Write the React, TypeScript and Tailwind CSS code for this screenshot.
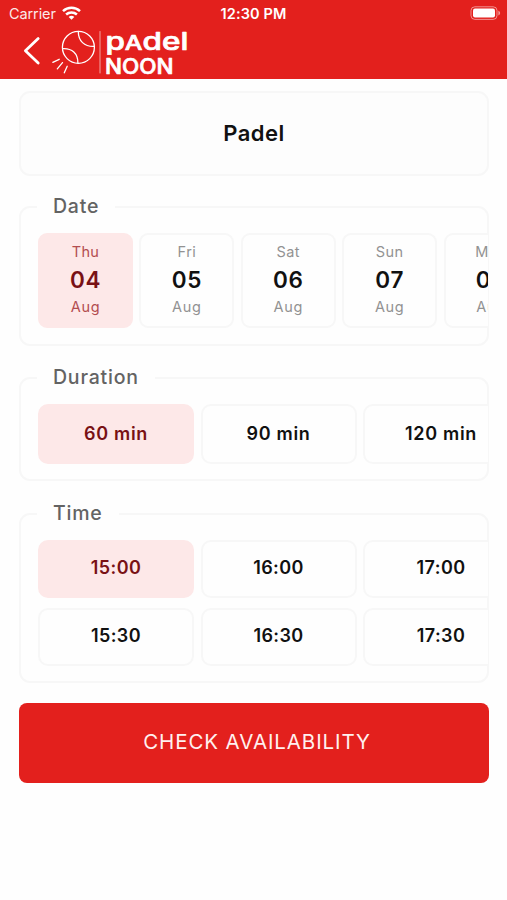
import React from 'react';

const DATES = [
  { day: 'Thu', date: '04', month: 'Aug' },
  { day: 'Fri', date: '05', month: 'Aug' },
  { day: 'Sat', date: '06', month: 'Aug' },
  { day: 'Sun', date: '07', month: 'Aug' },
  { day: 'Mon', date: '08', month: 'Aug' },
];

const DURATIONS = ['60 min', '90 min', '120 min'];

const TIMES = [
  ['15:00', '15:30'],
  ['16:00', '16:30'],
  ['17:00', '17:30'],
];

const Logo = () => (
  <svg className="ml-[9px] h-[52px] w-[150px] overflow-visible" viewBox="50 26 150 52" fill="none" stroke="#fff" strokeLinecap="round">
    <g strokeWidth="1.3">
      <circle cx="78.4" cy="47.3" r="16" />
      <path d="M78.3 31.5c0 9.5 6 15.2 15.8 14.9" />
      <path d="M62.6 48.6c9.4-.6 15.4 4.8 15.3 14.3" />
      <path d="M59.2 59.3l-6.4 3M62.5 62.6l-5.2 6.2M67.2 66.3l-2.9 6.5" />
    </g>
    <path d="M100 31.5v41.5" strokeWidth=".8" opacity=".75" />
    <g fill="#fff" stroke="#fff" strokeWidth=".7" strokeLinejoin="round" fontFamily="Inter, sans-serif" fontWeight="500">
      <text x="105.4" y="50.2" fontSize="24.5" textLength="83" lengthAdjust="spacingAndGlyphs">
        p<tspan fontSize="19.5">A</tspan>del
      </text>
      <text x="105" y="73.5" fontSize="21" textLength="68.5" lengthAdjust="spacingAndGlyphs">NOON</text>
    </g>
  </svg>
);

const StatusBar = () => (
  <div className="grid h-[27px] grid-cols-[1fr_auto_1fr] items-center px-[9px] text-[14.5px]">
    <div className="flex items-center gap-[6px]">
      <span className="tracking-[-0.1px] opacity-90">Carrier</span>
      <svg className="h-[14px] w-[19px] -translate-y-px" viewBox="0 0 19 14" fill="none" stroke="#fff" strokeWidth="2.5">
        <path d="M1 5.2c4.8-4.5 12.2-4.5 17 0" />
        <path d="M4.1 8.5c3.1-2.8 7.7-2.8 10.8 0" />
        <path d="M9.5 13.7L6.7 10.9c1.6-1.4 4-1.4 5.6 0z" fill="#fff" stroke="none" />
      </svg>
    </div>
    <span className="text-[14.5px] font-semibold tracking-[0.1px] whitespace-nowrap">12:30 PM</span>
    <svg className="-mr-[3px] h-[14px] w-[31px] -translate-y-px justify-self-end" viewBox="0 0 31 14" fill="none">
      <rect x="1" y=".8" width="26" height="12.6" rx="3.8" stroke="#fff" strokeOpacity=".5" />
      <rect x="3" y="2.6" width="22" height="9" rx="2" fill="#fff" />
      <path d="M28.4 4.8v4.6c1-.4 1.7-1.2 1.7-2.3s-.7-1.9-1.7-2.3z" fill="#fff" fillOpacity=".55" />
    </svg>
  </div>
);

const Section = ({ title, className, children }: { title: string; className: string; children: React.ReactNode }) => (
  <fieldset className={`min-w-0 rounded-[11px] border-2 border-[#f7f7f7] ${className}`}>
    <legend className="ml-4 h-7 px-4 text-[19.5px] leading-[26px] font-medium tracking-[0.8px] text-[#636363]">{title}</legend>
    <div className="-mr-px overflow-hidden pt-3 pl-[17px]">{children}</div>
  </fieldset>
);

const SELECTED = 'border-[#fde8e8] bg-[#fde8e8] text-[#791115]';
const IDLE = 'border-[#f7f7f7] bg-[#fefefe] text-[#111111]';

export default function App() {
  return (
    <div className="h-[900px] w-[507px] overflow-hidden bg-[#fefefe] font-['Inter',sans-serif]">
      <header className="h-[79px] bg-[#e3201d] text-white">
        <StatusBar />
        <div className="-mt-px flex h-[52px] items-center pl-[22px]">
          <svg className="-mt-[2px] h-[30px] w-[19px]" viewBox="0 0 19 30" fill="none" stroke="#fff" strokeWidth="2.8" strokeLinecap="round" strokeLinejoin="round">
            <path d="M16.2 2.6L3.4 14.8l12.8 12.2" />
          </svg>
          <Logo />
        </div>
      </header>

      <main className="pt-3 pr-[18px] pl-[19px]">
        <div className="flex h-[85px] items-center justify-center rounded-[11px] border-2 border-[#f7f7f7] bg-[#fdfdfd] text-[22px] font-semibold tracking-[0.5px] text-[#111111]">
          Padel
        </div>

        <Section title="Date" className="mt-[17px] pb-4">
          <div className="flex gap-[6.4px]">
            {DATES.map((d, i) => (
              <div key={d.date} className={`flex h-[95px] w-[95px] shrink-0 flex-col items-center rounded-[9px] border-2 pt-[7px] ${i === 0 ? SELECTED : IDLE}`}>
                <span className={`text-[14.5px] leading-5 tracking-[0.4px] ${i === 0 ? 'text-[#b34d50]' : 'text-[#929292]'}`}>{d.day}</span>
                <span className="text-[22.5px] leading-9 font-semibold tracking-[0.7px]">{d.date}</span>
                <span className={`text-[14.5px] leading-[17px] tracking-[0.7px] ${i === 0 ? 'text-[#b34d50]' : 'text-[#929292]'}`}>{d.month}</span>
              </div>
            ))}
          </div>
        </Section>

        <Section title="Duration" className="mt-[18px] pb-[15px]">
          <div className="flex gap-[6.5px]">
            {DURATIONS.map((label, i) => (
              <div key={label} className={`flex h-[60px] w-[156px] shrink-0 items-center justify-center rounded-[10px] border-2 pb-[2px] text-[18px] font-semibold tracking-[0.7px] ${i === 0 ? SELECTED : IDLE}`}>
                {label}
              </div>
            ))}
          </div>
        </Section>

        <Section title="Time" className="mt-[19px] pb-[15.5px]">
          <div className="flex gap-[6.5px]">
            {TIMES.map((slots) => (
              <div key={slots[0]} className="flex shrink-0 flex-col gap-[9.5px]">
                {slots.map((time) => (
                  <div key={time} className={`flex h-[58px] w-[156px] items-center justify-center rounded-[10px] border-2 pb-[3px] text-[18px] font-semibold tracking-[0.4px] ${time === '15:00' ? SELECTED : IDLE}`}>
                    {time}
                  </div>
                ))}
              </div>
            ))}
          </div>
        </Section>

        <button className="mt-5 block h-20 w-full rounded-[8px] bg-[#e3201d] pb-[2px] pl-[6px] text-[20.5px] tracking-[0.9px] text-[#fff0ef]">
          CHECK AVAILABILITY
        </button>
      </main>
    </div>
  );
}
